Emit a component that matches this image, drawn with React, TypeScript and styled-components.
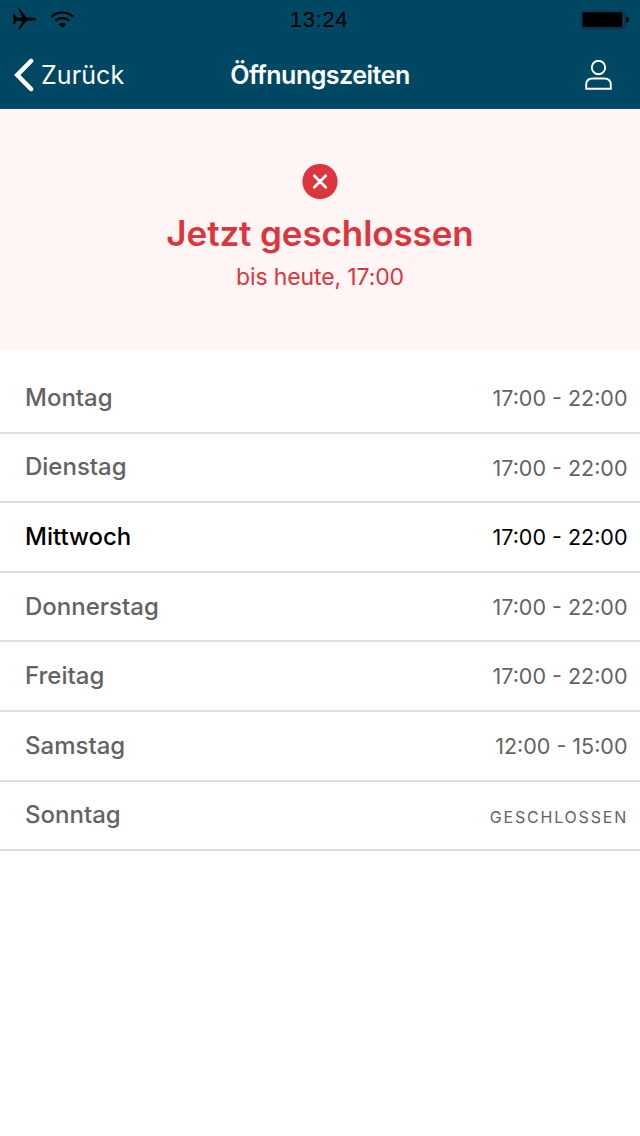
import styled, { createGlobalStyle } from "styled-components";

const GlobalStyle = createGlobalStyle`
  *, *::before, *::after { box-sizing: border-box; }
  body {
    margin: 0;
    background: #fff;
    font-family: Inter, "Liberation Sans", sans-serif;
    -webkit-font-smoothing: antialiased;
  }
`;

const Screen = styled.div`
  width: 640px;
  height: 1136px;
  display: flex;
  flex-direction: column;
  background: #fff;
  overflow: hidden;
`;

const Header = styled.header`
  height: 109px;
  flex: none;
  background: #004764;
  border-bottom: 1px solid #1b4662;
`;

const StatusBar = styled.div`
  height: 40px;
  display: grid;
  grid-template-columns: 1fr auto 1fr;
  align-items: center;
  padding: 0 11px 0 12px;
  color: #000;
`;

const StatusIcons = styled.div`
  display: flex;
  align-items: center;
  gap: 13px;
`;

const Clock = styled.time`
  font: 400 22px/40px "Liberation Sans", Arial, sans-serif;
  letter-spacing: 0.7px;
  margin-right: 3px;
`;

const BatterySlot = styled.div`
  display: flex;
  justify-content: flex-end;
`;

const NavBar = styled.nav`
  height: 68px;
  display: grid;
  grid-template-columns: 1fr auto 1fr;
  align-items: center;
  padding: 2px 28px 0 14px;
  color: #fff;
`;

const BackButton = styled.a`
  display: flex;
  align-items: center;
  gap: 7px;
  font-size: 25px;
  line-height: 32px;
  letter-spacing: 0.1px;
`;

const NavTitle = styled.h1`
  margin: 0 0 0 14px;
  font-size: 25px;
  line-height: 32px;
  font-weight: 600;
  letter-spacing: -0.5px;
`;

const ProfileSlot = styled.div`
  display: flex;
  justify-content: flex-end;
`;

const Banner = styled.section`
  height: 241px;
  flex: none;
  display: flex;
  flex-direction: column;
  align-items: center;
  padding-top: 55px;
  background: #fff5f4;
  color: #d9363e;
`;

const BannerTitle = styled.h2`
  margin: 11px 0 0;
  font-size: 35px;
  line-height: 44px;
  font-weight: 600;
  letter-spacing: -0.1px;
`;

const BannerNote = styled.p`
  margin: 6px 0 0;
  font-size: 23px;
  line-height: 32px;
  letter-spacing: -0.12px;
`;

const DayList = styled.ul`
  list-style: none;
  margin: 0;
  padding: 14px 0 0;
`;

const DayRow = styled.li<{ $today?: boolean }>`
  height: 69.6px;
  display: flex;
  align-items: center;
  justify-content: space-between;
  padding: 0 13px 0 25px;
  border-bottom: 2px solid #dcddde;
  color: ${(p) => (p.$today ? "#000" : "#636363")};
`;

const DayName = styled.span`
  font-size: 24px;
  line-height: 32px;
  font-weight: 500;
`;

const Hours = styled.span<{ $closed?: boolean }>`
  font-size: ${(p) => (p.$closed ? "16px" : "21.5px")};
  line-height: 32px;
  letter-spacing: ${(p) => (p.$closed ? "1.8px" : "0")};
  margin-right: ${(p) => (p.$closed ? "-1px" : "-0.5px")};
  padding-top: ${(p) => (p.$closed ? "3px" : "0.5px")};
`;

const week = [
  { day: "Montag", hours: "17:00 - 22:00" },
  { day: "Dienstag", hours: "17:00 - 22:00" },
  { day: "Mittwoch", hours: "17:00 - 22:00", today: true },
  { day: "Donnerstag", hours: "17:00 - 22:00" },
  { day: "Freitag", hours: "17:00 - 22:00" },
  { day: "Samstag", hours: "12:00 - 15:00" },
  { day: "Sonntag", hours: "GESCHLOSSEN", closed: true },
];

const PlaneIcon = () => (
  <svg width="25" height="24" viewBox="0 0 25 24">
    <path
      d="M1 5.7 H2.2 L5 9.5 L10.4 9.6 L6.2 0.6 H7.6 L14.4 9.6 H20 Q24.2 10 24.2 11.2 Q24.2 12.4 20 12.8 H14.4 L7.6 21.8 H6.2 L10.4 12.8 L5 12.9 L2.2 16.2 H1 L1.6 11.2 Z"
      fill="#000"
    />
  </svg>
);

const WifiIcon = () => (
  <svg width="25" height="19" viewBox="0 0 25 19">
    <g fill="none" stroke="#000" strokeWidth="2.2">
      <path d="M1.5 5.7 A16 16 0 0 1 23.1 5.7" />
      <path d="M5.3 9.8 A10.5 10.5 0 0 1 19.3 9.8" />
    </g>
    <path d="M8.7 13.4 A5.3 5.3 0 0 1 15.9 13.4 L12.3 17.1 Z" fill="#000" />
  </svg>
);

const BatteryIcon = () => (
  <svg width="49" height="20" viewBox="0 0 49 20">
    <rect x="0.75" y="0.75" width="44" height="18" rx="3" fill="none" stroke="#1c2a38" strokeWidth="1" />
    <rect x="2.5" y="2.2" width="40" height="15" rx="1" fill="#000" />
    <path d="M46 6.5 Q49 7.5 49 9.7 Q49 12 46 13 Z" fill="#000" />
  </svg>
);

const ChevronIcon = () => (
  <svg width="20" height="34" viewBox="0 0 20 34">
    <path d="M17 3 L3.3 17 L17 31" fill="none" stroke="#fff" strokeWidth="4.6" strokeLinecap="round" strokeLinejoin="miter" />
  </svg>
);

const PersonIcon = () => (
  <svg width="27" height="31" viewBox="0 0 27 31">
    <g fill="none" stroke="#fff" strokeWidth="1.9">
      <circle cx="13.5" cy="7.5" r="6.7" />
      <path d="M1.2 28.7 V25 Q1.2 18.5 7.7 18.5 H19.3 Q25.8 18.5 25.8 25 V28.7 Z" />
    </g>
  </svg>
);

const ClosedIcon = () => (
  <svg width="36" height="36" viewBox="0 0 36 36">
    <circle cx="18" cy="17.5" r="17.6" fill="#d9363e" />
    <path d="M12.3 11.8 L23.7 23.2 M23.7 11.8 L12.3 23.2" stroke="#fff" strokeWidth="2.7" strokeLinecap="round" />
  </svg>
);

export default function App() {
  return (
    <>
      <GlobalStyle />
      <Screen>
        <Header>
          <StatusBar>
            <StatusIcons>
              <PlaneIcon />
              <WifiIcon />
            </StatusIcons>
            <Clock>13:24</Clock>
            <BatterySlot>
              <BatteryIcon />
            </BatterySlot>
          </StatusBar>
          <NavBar>
            <BackButton>
              <ChevronIcon />
              <span>Zurück</span>
            </BackButton>
            <NavTitle>Öffnungszeiten</NavTitle>
            <ProfileSlot>
              <PersonIcon />
            </ProfileSlot>
          </NavBar>
        </Header>
        <Banner>
          <ClosedIcon />
          <BannerTitle>Jetzt geschlossen</BannerTitle>
          <BannerNote>bis heute, 17:00</BannerNote>
        </Banner>
        <DayList>
          {week.map(({ day, hours, today, closed }) => (
            <DayRow key={day} $today={today}>
              <DayName>{day}</DayName>
              <Hours $closed={closed}>{hours}</Hours>
            </DayRow>
          ))}
        </DayList>
      </Screen>
    </>
  );
}
